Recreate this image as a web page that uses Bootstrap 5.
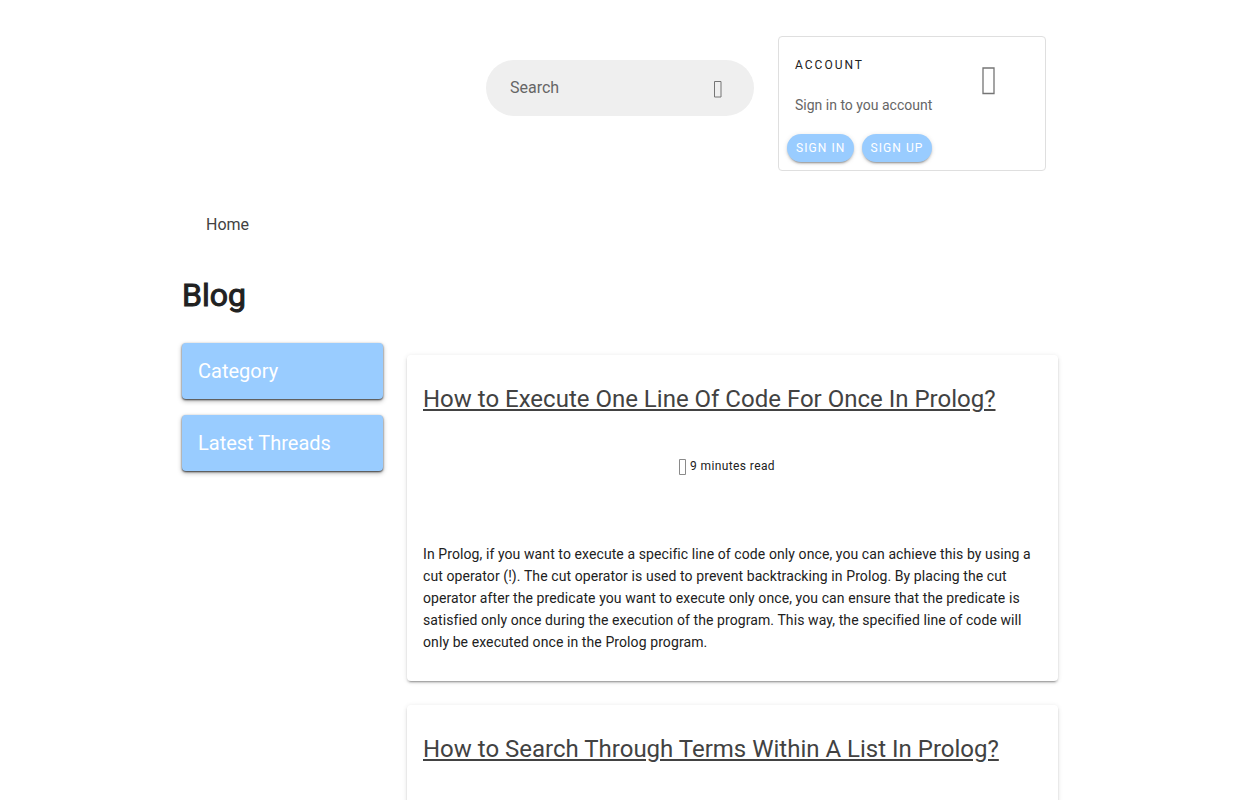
<!DOCTYPE html>
<html lang="en">
<head>
<meta charset="utf-8">
<meta name="viewport" content="width=device-width, initial-scale=1">
<title>Blog</title>
<link href="https://cdn.jsdelivr.net/npm/bootstrap@5.3.0/dist/css/bootstrap.min.css" rel="stylesheet">
<style>
body { font-family: Roboto, "Liberation Sans", sans-serif; color: #212121; background: #fff; }
.page-wrap { max-width: 900px; padding: 24px 12px; }
.head-col { padding: 12px; }
.search-box { height: 56px; margin-top: 24px; padding: 0 32px 0 24px; background: #efefef; border-radius: 28px; }
.search-box input { color: #212121; line-height: 24px; outline: 0; }
.search-box input::placeholder { color: #666; opacity: 1; }
.account-card { border: 1px solid #dfdfdf; border-radius: 4px; }
.account-top { padding: 4px 16px 12px; height: 97px; }
.overline { font-size: 12px; line-height: 16px; letter-spacing: .1666em; margin: 16px 0 22px; font-weight: 400; }
.sub-text { font-size: 14px; line-height: 20px; color: #666; margin: 0; }
.avatar-box { width: 80px; height: 80px; }
.btn-pill { height: 28px; padding: 0 8px 0 9px; border: 0; border-radius: 14px; background: #9cf; color: #fff; font-size: 12px; line-height: 28px; letter-spacing: .09em; }
.btn-pill, .post-card { box-shadow: 0 3px 1px -2px rgba(0,0,0,.2), 0 2px 2px 0 rgba(0,0,0,.14), 0 1px 5px 0 rgba(0,0,0,.12); }
.crumbs { padding: 30px 24px 18px; line-height: 24px; }
.crumbs a { color: #424242; }
.page-title { font-size: 32px; line-height: 48px; font-weight: 400; -webkit-text-stroke: 1px currentColor; margin: 16px 0 24px; }
.side-bar { height: 56px; padding: 0 16px; margin-bottom: 16px; border-radius: 4px; background: #9cf; color: #fff; font-size: 20px; line-height: 56px; font-weight: 400; box-shadow: 0 1px 2px rgba(0,0,0,.7), 0 2px 5px rgba(0,0,0,.3); }
.post-card { min-height: 326px; margin: 12px 0 24px; border-radius: 4px; padding: 28px 16px 27px; }
.post-title { font-size: 24px; line-height: 32px; font-weight: 400; margin: 0; }
.post-title a { color: #424242; }
.read-time { font-size: 12px; line-height: 20px; letter-spacing: .0333em; gap: 4px; margin: 40px 11px 67px 0; }
.post-text { font-size: 14px; line-height: 22px; letter-spacing: .0065em; margin: 0; }
</style>
</head>
<body>
<div class="container-fluid page-wrap">
  <header class="row g-0 justify-content-end">
    <div class="col-12 col-md-4 head-col">
      <form class="search-box d-flex align-items-center" role="search">
        <input type="search" class="border-0 bg-transparent p-0 flex-grow-1 w-100" placeholder="Search" aria-label="Search">
        <svg width="8" height="18" viewBox="0 0 8 18" class="flex-shrink-0 mt-1" aria-hidden="true"><path d="M.5.500h6.500v15.500h-6.500z" fill="none" stroke="#757575"/></svg>
      </form>
    </div>
    <div class="col-12 col-md-4 head-col">
      <section class="account-card">
        <div class="account-top d-flex justify-content-between">
          <div>
            <h2 class="overline">ACCOUNT</h2>
            <p class="sub-text">Sign in to you account</p>
          </div>
          <div class="avatar-box d-flex align-items-center justify-content-center">
            <svg width="14" height="28" viewBox="0 0 14 28" aria-hidden="true"><path d="M1 1h11v25.500h-11z" fill="none" stroke="#757575" stroke-width="1.300"/></svg>
          </div>
        </div>
        <div class="d-flex gap-2 px-2 pb-2">
          <button type="button" class="btn btn-pill">SIGN IN</button>
          <button type="button" class="btn btn-pill">SIGN UP</button>
        </div>
      </section>
    </div>
  </header>
  <nav class="crumbs" aria-label="Breadcrumb"><a href="#" class="text-decoration-none">Home</a></nav>
  <h1 class="page-title">Blog</h1>
  <div class="row">
    <aside class="col-12 col-md-3">
      <h2 class="side-bar">Category</h2>
      <h2 class="side-bar">Latest Threads</h2>
    </aside>
    <main class="col-12 col-md-9">
      <article class="post-card">
        <h2 class="post-title"><a href="#">How to Execute One Line Of Code For Once In Prolog?</a></h2>
        <div class="read-time d-flex align-items-center justify-content-center">
          <svg width="7" height="17" viewBox="0 0 7 17" class="mt-1" aria-hidden="true"><path d="M.5.500h6v15h-6z" fill="none" stroke="#8a8a8a"/></svg>
          <span>9 minutes read</span>
        </div>
        <p class="post-text">In Prolog, if you want to execute a specific line of code only once, you can achieve this by using a cut operator (!). The cut operator is used to prevent backtracking in Prolog. By placing the cut operator after the predicate you want to execute only once, you can ensure that the predicate is satisfied only once during the execution of the program. This way, the specified line of code will only be executed once in the Prolog program.</p>
      </article>
      <article class="post-card">
        <h2 class="post-title"><a href="#">How to Search Through Terms Within A List In Prolog?</a></h2>
      </article>
    </main>
  </div>
</div>
<script src="https://cdn.jsdelivr.net/npm/bootstrap@5.3.0/dist/js/bootstrap.bundle.min.js"></script>
</body>
</html>
